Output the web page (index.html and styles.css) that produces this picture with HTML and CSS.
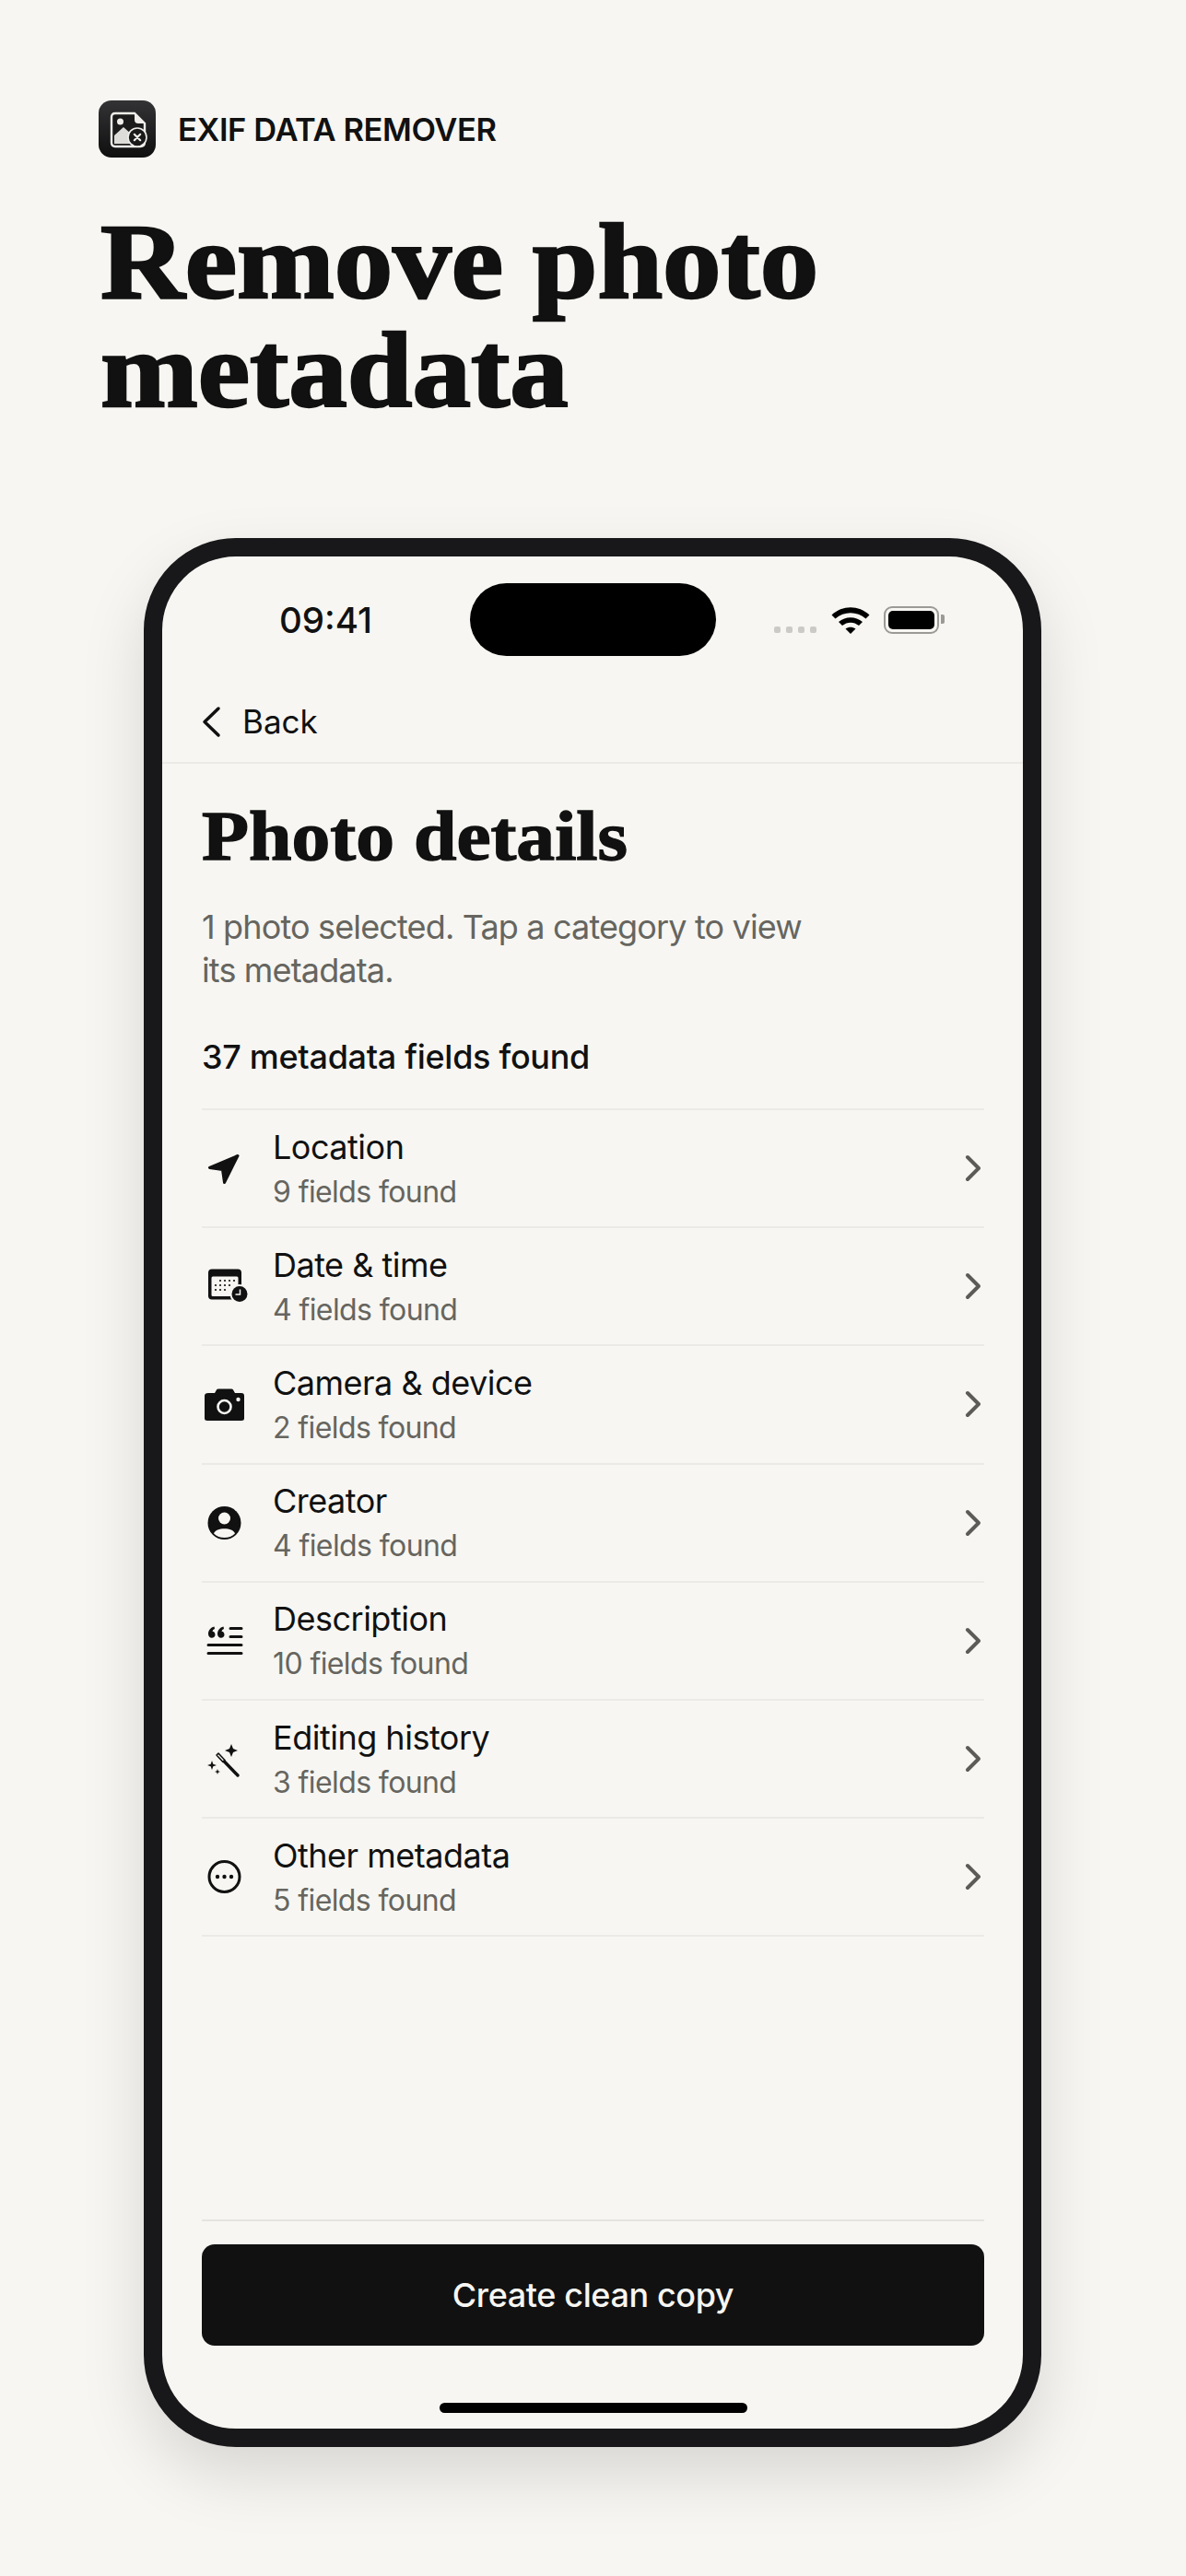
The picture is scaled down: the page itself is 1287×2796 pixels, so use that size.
FILE: index.html
```html
<!DOCTYPE html>
<html lang="en">
<head>
    <meta charset="UTF-8">
    <meta name="viewport" content="width=device-width, initial-scale=1.0">
    <title>Exif Data Remover</title>
    <link rel="stylesheet" href="styles.css">
</head>
<body>
    <header class="intro">
        <div class="brand">
            <svg class="brand-logo" viewBox="0 0 62 62">
                <defs>
                    <linearGradient id="logoBg" x1="0" y1="0" x2="0" y2="1">
                        <stop offset="0" stop-color="#333335"/>
                        <stop offset="1" stop-color="#0f0f10"/>
                    </linearGradient>
                </defs>
                <rect width="62" height="62" rx="14" fill="url(#logoBg)"/>
                <path d="M18 14H39L50 25V45Q50 50 45 50H18Q14 50 14 46V18Q14 14 18 14Z" fill="#1c1c1d" stroke="#efeeea" stroke-width="2.4"/>
                <path d="M39 14V21Q39 25 43 25H50Z" fill="#efeeea"/>
                <path d="M17 47V38L27 29L36 37L42 33L48 38V47Z" fill="#dddcd8"/>
                <circle cx="23.500" cy="23" r="3.500" fill="#efeeea"/>
                <circle cx="42" cy="40" r="10" fill="#1a1a1b" stroke="#efeeea" stroke-width="1.600"/>
                <path d="M38.800 36.800L45.200 43.200M45.200 36.800L38.800 43.200" stroke="#efeeea" stroke-width="2.200" stroke-linecap="round"/>
            </svg>
            <span class="brand-name">EXIF DATA REMOVER</span>
        </div>
        <h1><span class="wide">Remove photo</span><br><span class="wide">metadata</span></h1>
    </header>

    <main class="phone">
        <div class="screen">
            <div class="status-bar">
                <span class="status-time">09:41</span>
                <span class="island"></span>
                <span class="signal"><i></i><i></i><i></i><i></i></span>
                <svg class="wifi" viewBox="0 0 42 30">
                    <path d="M0.500 9.500C12 -1.500 30 -1.500 41.500 9.500L37.500 13.500C28 5 14 5 4.500 13.500Z"/>
                    <path d="M8 17C15.500 10.500 26.500 10.500 34 17L30 21C24.500 16.500 17.500 16.500 12 21Z"/>
                    <path d="M15.500 24.500C19 22 23 22 26.500 24.500L21 30Z"/>
                </svg>
                <span class="battery"><span class="battery-fill"></span></span>
            </div>

            <div class="back-row">
                <svg class="back-icon" viewBox="0 0 24 36"><path d="M20 4L5 18.500L20 33"/></svg>
                <span>Back</span>
            </div>

            <section class="content">
                <h2><span class="wide">Photo details</span></h2>
                <p class="lead">1 photo selected. Tap a category to view its metadata.</p>
                <p class="count">37 metadata fields found</p>

                <ul class="categories">
                    <li class="category">
                        <svg class="category-icon" viewBox="0 0 50 50">
                            <path d="M39 11.500L8.500 24.500L22.500 26.500L24.500 40.500Z" fill="#111" stroke="#111" stroke-width="3" stroke-linejoin="round"/>
                        </svg>
                        <div class="category-text"><b>Location</b><span>9 fields found</span></div>
                        <svg class="chevron" viewBox="0 0 24 36"><path d="M6 6L18 18L6 30"/></svg>
                    </li>
                    <li class="category">
                        <svg class="category-icon" viewBox="0 0 50 50">
                            <rect x="7" y="6.500" width="36" height="33" rx="4" fill="#111"/>
                            <rect x="10.500" y="14.500" width="29" height="21.500" rx="1.500" fill="#f7f6f2"/>
                            <g fill="#111">
                                <circle cx="20" cy="19" r="1.100"/><circle cx="25" cy="19" r="1.100"/><circle cx="30" cy="19" r="1.100"/><circle cx="35" cy="19" r="1.100"/>
                                <circle cx="15" cy="24" r="1.100"/><circle cx="20" cy="24" r="1.100"/><circle cx="25" cy="24" r="1.100"/><circle cx="30" cy="24" r="1.100"/>
                                <circle cx="15" cy="29" r="1.100"/><circle cx="20" cy="29" r="1.100"/><circle cx="25" cy="29" r="1.100"/>
                            </g>
                            <circle cx="41" cy="33.500" r="10.500" fill="#f7f6f2"/>
                            <circle cx="41" cy="33.500" r="8.500" fill="#111"/>
                            <path d="M41.500 28.500V34H36.500" fill="none" stroke="#f7f6f2" stroke-width="1.500"/>
                        </svg>
                        <div class="category-text"><b>Date &amp; time</b><span>4 fields found</span></div>
                        <svg class="chevron" viewBox="0 0 24 36"><path d="M6 6L18 18L6 30"/></svg>
                    </li>
                    <li class="category">
                        <svg class="category-icon" viewBox="0 0 50 50">
                            <path d="M7 13H14L16 9.500Q16.500 8.500 18 8.500H32Q33.500 8.500 34 9.500L36 13H43Q46 13 46 16V40.500Q46 43 43 43H6Q3 43 3 40.500V16Q3 13 7 13Z" fill="#111"/>
                            <circle cx="24.500" cy="28" r="7" fill="#111" stroke="#f7f6f2" stroke-width="2.600"/>
                            <circle cx="39.500" cy="20" r="2.200" fill="#f7f6f2"/>
                        </svg>
                        <div class="category-text"><b>Camera &amp; device</b><span>2 fields found</span></div>
                        <svg class="chevron" viewBox="0 0 24 36"><path d="M6 6L18 18L6 30"/></svg>
                    </li>
                    <li class="category">
                        <svg class="category-icon" viewBox="0 0 50 50">
                            <circle cx="24.500" cy="25" r="18" fill="#111"/>
                            <circle cx="24.500" cy="20" r="6.500" fill="#f7f6f2"/>
                            <path d="M13 36.500C15 29.500 34 29.500 36 36.500C33 39.500 29 41 24.500 41C20 41 16 39.500 13 36.500Z" fill="#f7f6f2"/>
                        </svg>
                        <div class="category-text"><b>Creator</b><span>4 fields found</span></div>
                        <svg class="chevron" viewBox="0 0 24 36"><path d="M6 6L18 18L6 30"/></svg>
                    </li>
                    <li class="category">
                        <svg class="category-icon" viewBox="0 0 50 50">
                            <path d="M31 11.500H43M31 20.500H43M7 29.500H43M7 38.500H43" stroke="#111" stroke-width="3" stroke-linecap="round"/>
                            <path d="M13.500 9.500C9.500 10.500 7 13.500 7 17.500C7 20 8.700 21.800 10.800 21.800C12.900 21.800 14.500 20.200 14.500 18.200C14.500 16.400 13.300 15 11.500 14.800C11.800 13.500 12.600 12.500 14 12Z" fill="#111"/>
                            <path d="M23.500 9.500C19.500 10.500 17 13.500 17 17.500C17 20 18.700 21.800 20.800 21.800C22.900 21.800 24.500 20.200 24.500 18.200C24.500 16.400 23.300 15 21.500 14.800C21.800 13.500 22.600 12.500 24 12Z" fill="#111"/>
                        </svg>
                        <div class="category-text"><b>Description</b><span>10 fields found</span></div>
                        <svg class="chevron" viewBox="0 0 24 36"><path d="M6 6L18 18L6 30"/></svg>
                    </li>
                    <li class="category">
                        <svg class="category-icon" viewBox="0 0 50 50">
                            <path d="M16 21L18 19L25 26.500L23 28.500Z" fill="none" stroke="#111" stroke-width="1.600" stroke-linejoin="round"/>
                            <path d="M24.500 28L39 43" stroke="#111" stroke-width="3.400" stroke-linecap="round"/>
                            <path d="M32 9L34 14L39 16L34 18L32 23L30 18L25 16L30 14Z" fill="#111"/>
                            <path d="M11 27L12.300 30.700L16 32L12.300 33.300L11 37L9.700 33.300L6 32L9.700 30.700Z" fill="#111"/>
                            <path d="M17 36L17.800 38.200L20 39L17.800 39.800L17 42L16.200 39.800L14 39L16.200 38.200Z" fill="#111"/>
                        </svg>
                        <div class="category-text"><b>Editing history</b><span>3 fields found</span></div>
                        <svg class="chevron" viewBox="0 0 24 36"><path d="M6 6L18 18L6 30"/></svg>
                    </li>
                    <li class="category">
                        <svg class="category-icon" viewBox="0 0 50 50">
                            <circle cx="24.500" cy="25" r="16.500" fill="none" stroke="#111" stroke-width="3"/>
                            <circle cx="17" cy="25" r="2.200" fill="#111"/><circle cx="24.500" cy="25" r="2.200" fill="#111"/><circle cx="32" cy="25" r="2.200" fill="#111"/>
                        </svg>
                        <div class="category-text"><b>Other metadata</b><span>5 fields found</span></div>
                        <svg class="chevron" viewBox="0 0 24 36"><path d="M6 6L18 18L6 30"/></svg>
                    </li>
                </ul>
            </section>

            <footer class="action">
                <button type="button" class="primary-button">Create clean copy</button>
                <div class="home-bar"></div>
            </footer>
        </div>
    </main>
</body>
</html>
```

FILE: styles.css
```css
body {
    margin: 0;
    height: 2796px;
    overflow: hidden;
    background: #f7f6f2;
    color: #111;
    font-family: Inter, "Liberation Sans", sans-serif;
}

.intro {
    padding: 109px 0 0 107px;
}

.brand {
    display: flex;
    align-items: center;
    gap: 24px;
}

.brand-logo {
    width: 62px;
    height: 62px;
}

.brand-name {
    font-size: 34.5px;
    font-weight: 600;
    letter-spacing: -0.4px;
}

h1, h2 {
    margin: 0;
    font-family: "Liberation Serif", serif;
    font-weight: 700;
    -webkit-text-stroke: 2.4px #111;
}

.wide {
    display: inline-block;
    transform-origin: left center;
}

h1 {
    margin-top: 54px;
    margin-left: 2px;
    font-size: 117px;
    line-height: 118px;
}

h1 .wide {
    transform: scaleX(1.085);
}

.phone {
    box-sizing: border-box;
    width: 974px;
    height: 2072px;
    margin: 123px 0 0 156px;
    border: 20px solid #18181a;
    border-radius: 100px;
    background: #f7f6f2;
    box-shadow: 0 30px 70px rgba(0, 0, 0, 0.13);
}

.screen {
    display: flex;
    flex-direction: column;
    height: 100%;
}

.status-bar {
    display: flex;
    align-items: flex-start;
    height: 136px;
    padding-top: 29px;
    box-sizing: border-box;
}

.status-time {
    width: 334px;
    margin-top: 18px;
    padding-left: 127px;
    box-sizing: border-box;
    font-size: 38.5px;
    line-height: 44px;
    font-weight: 500;
}

.island {
    width: 267px;
    height: 79px;
    border-radius: 40px;
    background: #000;
}

.signal {
    display: flex;
    gap: 6px;
    margin: 47px 0 0 63px;
}

.signal i {
    width: 7px;
    height: 7px;
    border-radius: 2px;
    background: #cbcac6;
}

.wifi {
    width: 42px;
    height: 30px;
    margin: 25px 0 0 16px;
}

.battery {
    position: relative;
    box-sizing: border-box;
    width: 60px;
    height: 30px;
    margin: 25px 0 0 15px;
    padding: 3px;
    border: 2px solid #9b9a97;
    border-radius: 9px;
}

.battery::after {
    content: "";
    position: absolute;
    right: -8px;
    top: 7px;
    width: 4px;
    height: 10px;
    border-radius: 0 2px 2px 0;
    background: #9b9a97;
}

.battery-fill {
    display: block;
    height: 100%;
    border-radius: 5px;
    background: #000;
}

.back-row {
    display: flex;
    align-items: center;
    gap: 22px;
    height: 89px;
    padding-left: 41px;
    border-bottom: 2px solid #ebeae6;
    font-size: 35px;
    padding-bottom: 2px;
    box-sizing: border-box;
}

.back-icon {
    width: 24px;
    height: 36px;
    fill: none;
    stroke: #111;
    stroke-width: 3.5;
    stroke-linecap: round;
    stroke-linejoin: round;
}

.content {
    flex: 1;
    padding: 0 42px 0 43px;
}

h2 {
    margin-top: 34px;
    font-size: 76px;
    line-height: 88px;
    -webkit-text-stroke-width: 1.4px;
}

h2 .wide {
    transform: scaleX(1.1);
}

.lead {
    width: 670px;
    margin: 32px 0 0;
    font-size: 36px;
    line-height: 47px;
    letter-spacing: -0.85px;
    color: #66655f;
}

.count {
    margin: 47px 0 0;
    font-size: 36px;
    line-height: 47px;
    font-weight: 500;
    letter-spacing: -0.3px;
}

.categories {
    margin: 32px 0 0;
    padding: 0;
    list-style: none;
    border-top: 2px solid #ebeae6;
}

.category {
    display: flex;
    align-items: center;
    box-sizing: border-box;
    height: 128.2px;
    border-bottom: 2px solid #ebeae6;
}

.category-icon {
    flex: none;
    width: 50px;
    height: 50px;
}

.category-text {
    display: flex;
    flex-direction: column;
    flex: 1;
    margin-left: 27px;
    padding-top: 2px;
}

.category-text b {
    font-size: 36px;
    line-height: 48px;
    font-weight: 400;
    letter-spacing: -0.5px;
}

.category-text span {
    font-size: 32px;
    line-height: 49px;
    letter-spacing: -0.6px;
    color: #66655f;
}

.chevron {
    flex: none;
    width: 24px;
    height: 36px;
    fill: none;
    stroke: #5c5b57;
    stroke-width: 4;
    stroke-linecap: round;
    stroke-linejoin: round;
}

.action {
    margin: 0 42px 0 43px;
    border-top: 2px solid #e6e4e0;
    padding-top: 25px;
}

.primary-button {
    display: block;
    width: 100%;
    height: 110px;
    border: none;
    border-radius: 14px;
    background: #111;
    color: #f7f6f2;
    font-family: inherit;
    font-size: 36px;
    font-weight: 500;
    letter-spacing: -0.4px;
}

.home-bar {
    width: 334px;
    height: 11px;
    margin: 62px auto 17px;
    border-radius: 6px;
    background: #000;
}
```
